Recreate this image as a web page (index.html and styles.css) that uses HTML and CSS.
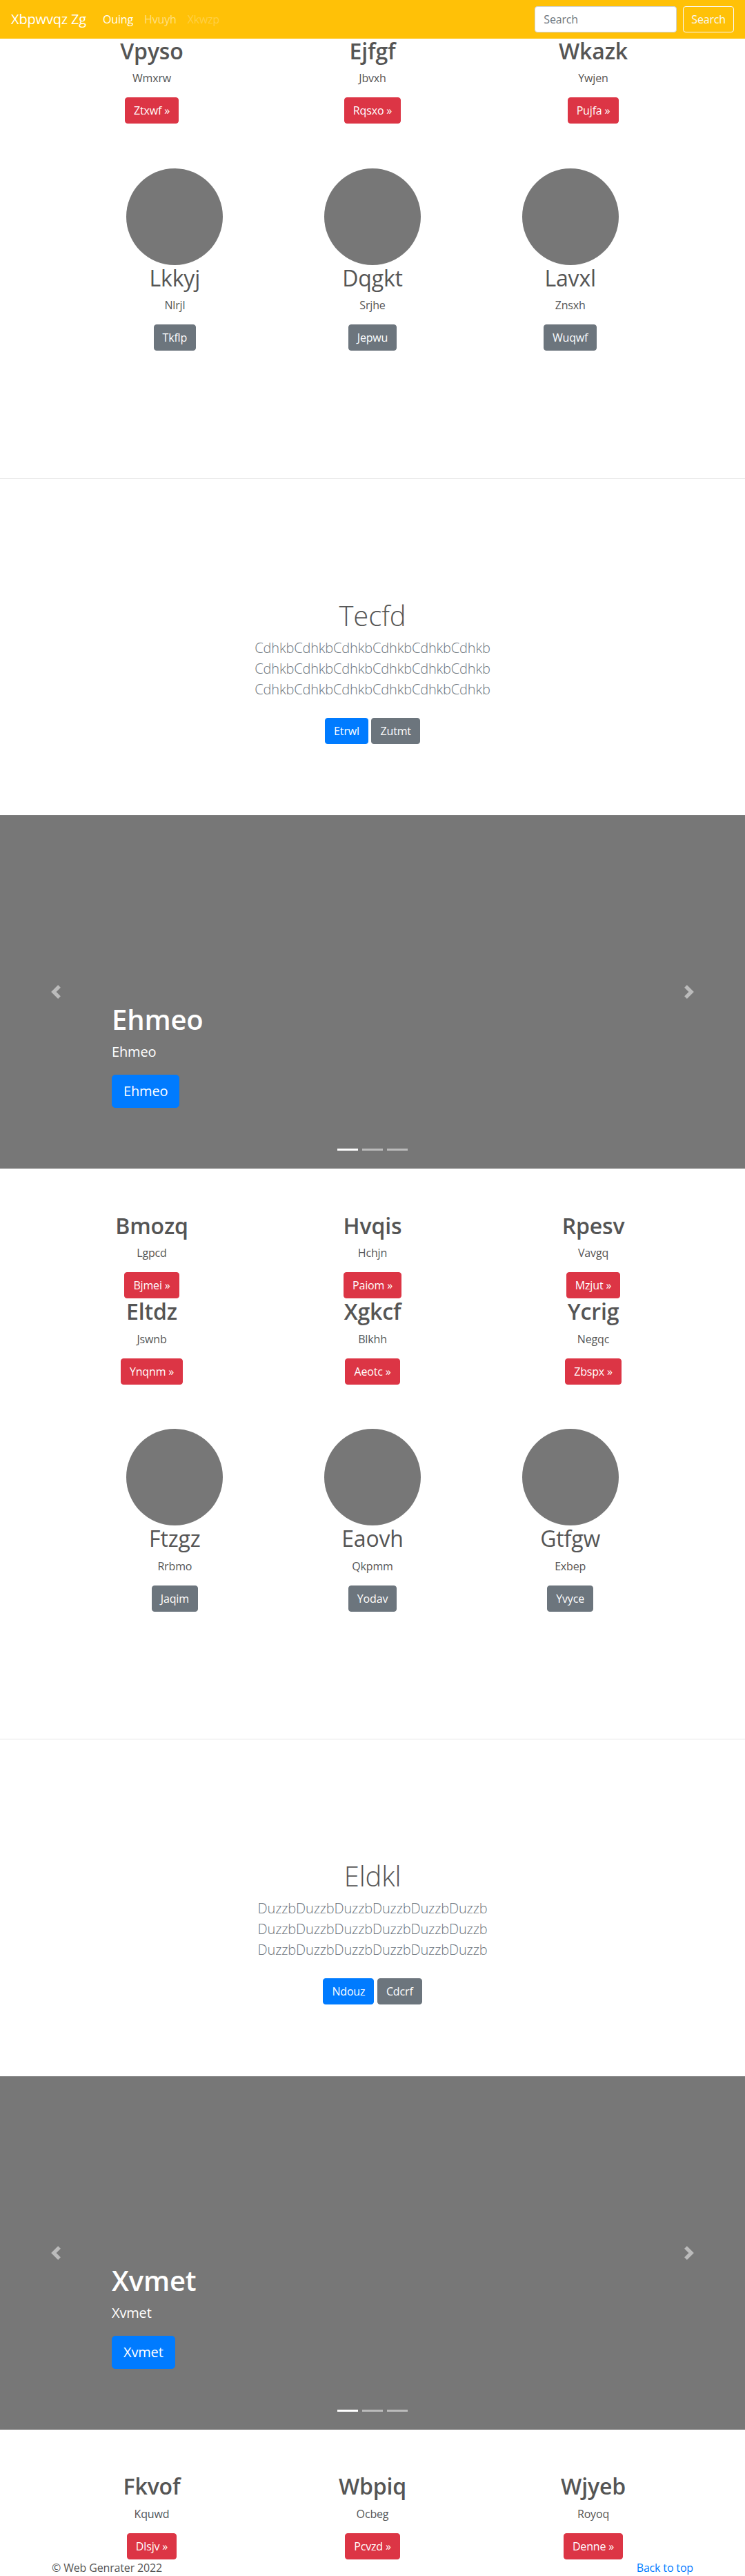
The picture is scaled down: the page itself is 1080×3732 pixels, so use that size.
FILE: index.html
```html
<!DOCTYPE html>
<html lang="en">
<head>
<meta charset="utf-8">
<title>Xbpwvqz Zg</title>
<link rel="stylesheet" href="styles.css">
</head>
<body>
<nav class="navbar">
  <a class="brand" href="#">Xbpwvqz Zg</a>
  <ul class="nav">
    <li class="active"><a href="#">Ouing</a></li>
    <li><a href="#">Hvuyh</a></li>
    <li class="disabled"><a href="#">Xkwzp</a></li>
  </ul>
  <form class="search">
    <input type="text" placeholder="Search">
    <button type="button">Search</button>
  </form>
</nav>

<main class="page">
  <section class="features">
    <div class="feature"><h2>Vpyso</h2><p>Wmxrw</p><a class="btn btn-danger" href="#">Ztxwf &raquo;</a></div>
    <div class="feature"><h2>Ejfgf</h2><p>Jbvxh</p><a class="btn btn-danger" href="#">Rqsxo &raquo;</a></div>
    <div class="feature"><h2>Wkazk</h2><p>Ywjen</p><a class="btn btn-danger" href="#">Pujfa &raquo;</a></div>
  </section>

  <section class="circles">
    <div class="circle-item"><svg width="140" height="140" viewBox="0 0 140 140"><circle cx="70" cy="70" r="70" fill="#777"/></svg><h2>Lkkyj</h2><p>Nlrjl</p><a class="btn btn-secondary" href="#">Tkflp</a></div>
    <div class="circle-item"><svg width="140" height="140" viewBox="0 0 140 140"><circle cx="70" cy="70" r="70" fill="#777"/></svg><h2>Dqgkt</h2><p>Srjhe</p><a class="btn btn-secondary" href="#">Jepwu</a></div>
    <div class="circle-item"><svg width="140" height="140" viewBox="0 0 140 140"><circle cx="70" cy="70" r="70" fill="#777"/></svg><h2>Lavxl</h2><p>Znsxh</p><a class="btn btn-secondary" href="#">Wuqwf</a></div>
  </section>

  <hr class="divider">

  <section class="jumbo">
    <h1>Tecfd</h1>
    <p class="lead">CdhkbCdhkbCdhkbCdhkbCdhkbCdhkb CdhkbCdhkbCdhkbCdhkbCdhkbCdhkb CdhkbCdhkbCdhkbCdhkbCdhkbCdhkb</p>
    <div class="jumbo-actions"><a class="btn btn-primary" href="#">Etrwl</a><a class="btn btn-secondary" href="#">Zutmt</a></div>
  </section>

  <div class="carousel">
    <div class="indicators"><span class="active"></span><span></span><span></span></div>
    <div class="caption">
      <h1>Ehmeo</h1>
      <p>Ehmeo</p>
      <a class="btn btn-lg btn-primary" href="#">Ehmeo</a>
    </div>
    <a class="control prev" href="#"><svg width="20" height="20" viewBox="0 0 8 8"><path fill="#fff" d="M5.25 0l-4 4 4 4 1.5-1.5L4.25 4l2.5-2.5L5.25 0z"/></svg></a>
    <a class="control next" href="#"><svg width="20" height="20" viewBox="0 0 8 8"><path fill="#fff" d="M2.75 0l-1.5 1.5L3.75 4l-2.5 2.5L2.75 8l4-4-4-4z"/></svg></a>
  </div>

  <section class="features after">
    <div class="feature"><h2>Bmozq</h2><p>Lgpcd</p><a class="btn btn-danger" href="#">Bjmei &raquo;</a></div>
    <div class="feature"><h2>Hvqis</h2><p>Hchjn</p><a class="btn btn-danger" href="#">Paiom &raquo;</a></div>
    <div class="feature"><h2>Rpesv</h2><p>Vavgq</p><a class="btn btn-danger" href="#">Mzjut &raquo;</a></div>
    <div class="feature"><h2>Eltdz</h2><p>Jswnb</p><a class="btn btn-danger" href="#">Ynqnm &raquo;</a></div>
    <div class="feature"><h2>Xgkcf</h2><p>Blkhh</p><a class="btn btn-danger" href="#">Aeotc &raquo;</a></div>
    <div class="feature"><h2>Ycrig</h2><p>Negqc</p><a class="btn btn-danger" href="#">Zbspx &raquo;</a></div>
  </section>

  <section class="circles">
    <div class="circle-item"><svg width="140" height="140" viewBox="0 0 140 140"><circle cx="70" cy="70" r="70" fill="#777"/></svg><h2>Ftzgz</h2><p>Rrbmo</p><a class="btn btn-secondary" href="#">Jaqim</a></div>
    <div class="circle-item"><svg width="140" height="140" viewBox="0 0 140 140"><circle cx="70" cy="70" r="70" fill="#777"/></svg><h2>Eaovh</h2><p>Qkpmm</p><a class="btn btn-secondary" href="#">Yodav</a></div>
    <div class="circle-item"><svg width="140" height="140" viewBox="0 0 140 140"><circle cx="70" cy="70" r="70" fill="#777"/></svg><h2>Gtfgw</h2><p>Exbep</p><a class="btn btn-secondary" href="#">Yvyce</a></div>
  </section>

  <hr class="divider">

  <section class="jumbo">
    <h1>Eldkl</h1>
    <p class="lead">DuzzbDuzzbDuzzbDuzzbDuzzbDuzzb DuzzbDuzzbDuzzbDuzzbDuzzbDuzzb DuzzbDuzzbDuzzbDuzzbDuzzbDuzzb</p>
    <div class="jumbo-actions"><a class="btn btn-primary" href="#">Ndouz</a><a class="btn btn-secondary" href="#">Cdcrf</a></div>
  </section>

  <div class="carousel">
    <div class="indicators"><span class="active"></span><span></span><span></span></div>
    <div class="caption">
      <h1>Xvmet</h1>
      <p>Xvmet</p>
      <a class="btn btn-lg btn-primary" href="#">Xvmet</a>
    </div>
    <a class="control prev" href="#"><svg width="20" height="20" viewBox="0 0 8 8"><path fill="#fff" d="M5.25 0l-4 4 4 4 1.5-1.5L4.25 4l2.5-2.5L5.25 0z"/></svg></a>
    <a class="control next" href="#"><svg width="20" height="20" viewBox="0 0 8 8"><path fill="#fff" d="M2.75 0l-1.5 1.5L3.75 4l-2.5 2.5L2.75 8l4-4-4-4z"/></svg></a>
  </div>

  <section class="features after">
    <div class="feature"><h2>Fkvof</h2><p>Kquwd</p><a class="btn btn-danger" href="#">Dlsjv &raquo;</a></div>
    <div class="feature"><h2>Wbpiq</h2><p>Ocbeg</p><a class="btn btn-danger" href="#">Pcvzd &raquo;</a></div>
    <div class="feature"><h2>Wjyeb</h2><p>Royoq</p><a class="btn btn-danger" href="#">Denne &raquo;</a></div>
  </section>

  <footer class="footer">
    <p>&copy; Web Genrater 2022</p>
    <p><a href="#">Back to top</a></p>
  </footer>
</main>
</body>
</html>
```

FILE: styles.css
```css
* { box-sizing: border-box; }

html, body { margin: 0; padding: 0; }

body {
  font-family: "Open Sans", "Noto Sans", "DejaVu Sans", sans-serif;
  font-size: 16px;
  line-height: 1.5;
  color: #555;
  background: #fff;
  letter-spacing: -0.01em;
}

/* ---------- navbar ---------- */
.navbar {
  position: fixed;
  top: 0;
  left: 0;
  right: 0;
  height: 56px;
  background: #ffc107;
  display: flex;
  align-items: center;
  padding: 0 16px;
  z-index: 20;
}
.brand {
  font-size: 20px;
  line-height: 30px;
  color: #fff;
  text-decoration: none;
  margin-right: 16px;
}
.nav {
  display: flex;
  list-style: none;
  margin: 0;
  padding: 0;
  flex: 1;
}
.nav a {
  display: block;
  padding: 8px;
  line-height: 24px;
  color: rgba(255, 255, 255, 0.5);
  text-decoration: none;
}
.nav .active a { color: #fff; }
.nav .disabled a { color: rgba(255, 255, 255, 0.25); }

.search {
  display: flex;
  align-items: center;
  margin: 0;
}
.search input {
  width: 206px;
  height: 38px;
  padding: 6px 12px;
  font-family: inherit;
  font-size: 16px;
  line-height: 24px;
  letter-spacing: inherit;
  color: #495057;
  background: #fff;
  border: 1px solid #ced4da;
  border-radius: 4px;
  margin-right: 9px;
}
.search input::placeholder { color: #6c757d; }
.search button {
  height: 38px;
  padding: 6px 11px;
  font-family: inherit;
  font-size: 16px;
  line-height: 24px;
  letter-spacing: inherit;
  color: #f8f9fa;
  background: transparent;
  border: 1px solid #f8f9fa;
  border-radius: 4px;
}

/* ---------- buttons ---------- */
.btn {
  display: inline-block;
  padding: 6px 12px;
  font-size: 16px;
  line-height: 24px;
  border: 1px solid transparent;
  border-radius: 4px;
  color: #fff;
  text-decoration: none;
  white-space: nowrap;
}
.btn-danger { background: #dc3545; border-color: #dc3545; }
.btn-secondary { background: #6c757d; border-color: #6c757d; }
.btn-primary { background: #007bff; border-color: #007bff; }
.btn-lg {
  padding: 8px 16px;
  font-size: 20px;
  line-height: 30px;
  border-radius: 5px;
}

/* ---------- page flow ---------- */
.page { padding-top: 55px; }

.features {
  width: 960px;
  margin: 0 auto;
  display: grid;
  grid-template-columns: repeat(3, 1fr);
}
.features.after { margin-top: 63.6px; }

.feature,
.circle-item {
  display: flex;
  flex-direction: column;
  align-items: center;
  text-align: center;
}
.feature h2,
.circle-item h2 {
  margin: 0 0 8px;
  font-size: 32px;
  line-height: 38.4px;
  color: #555;
}
.feature h2 { font-weight: 600; }
.circle-item h2 { font-weight: 400; }
.feature p,
.circle-item p {
  margin: 0 0 16px;
  line-height: 24px;
}

.circles {
  width: 860px;
  margin: 64.6px auto 0;
  display: grid;
  grid-template-columns: repeat(3, 1fr);
}
.circle-item svg { display: block; }

.divider {
  margin: 184.5px 0 0;
  height: 0;
  border: 0;
  border-top: 1px solid rgba(0, 0, 0, 0.1);
}

/* ---------- jumbotron ---------- */
.jumbo {
  padding-top: 174.2px;
  text-align: center;
}
.jumbo h1 {
  margin: 0 0 8px;
  font-size: 40px;
  line-height: 48px;
  font-weight: 300;
  color: #555;
}
.lead {
  margin: 0 auto;
  max-width: 420px;
  font-size: 20px;
  line-height: 30px;
  font-weight: 300;
  color: #6c757d;
}
.jumbo-actions {
  margin-top: 25.5px;
  display: flex;
  justify-content: center;
  gap: 4.6px;
}

/* ---------- carousel ---------- */
.carousel {
  position: relative;
  margin-top: 103.8px;
  height: 512px;
  background: #777;
  overflow: hidden;
}
.control {
  position: absolute;
  top: 0;
  bottom: 0;
  width: 15%;
  display: flex;
  align-items: center;
  justify-content: center;
  opacity: 0.5;
}
.control.prev { left: 0; }
.control.next { right: 0; }
.control svg { display: block; }

.indicators {
  position: absolute;
  left: 0;
  right: 0;
  bottom: 16px;
  display: flex;
  justify-content: center;
}
.indicators span {
  width: 30px;
  height: 3px;
  margin: 10px 3px;
  background: #fff;
  opacity: 0.5;
}
.indicators span.active { opacity: 1; }

.caption {
  position: absolute;
  left: 15%;
  bottom: 88px;
  display: flex;
  flex-direction: column;
  align-items: flex-start;
  color: #fff;
}
.caption h1 {
  margin: 0 0 8px;
  font-size: 40px;
  line-height: 48px;
  font-weight: 600;
}
.caption p {
  margin: 0 0 18px;
  font-size: 20px;
  line-height: 30px;
}

/* ---------- footer ---------- */
.footer {
  width: 960px;
  margin: 0 auto;
  padding: 0 15px;
  display: flex;
  justify-content: space-between;
}
.footer p {
  margin: 0 0 16px;
  line-height: 24px;
}
.footer a {
  color: #007bff;
  text-decoration: none;
}
```
